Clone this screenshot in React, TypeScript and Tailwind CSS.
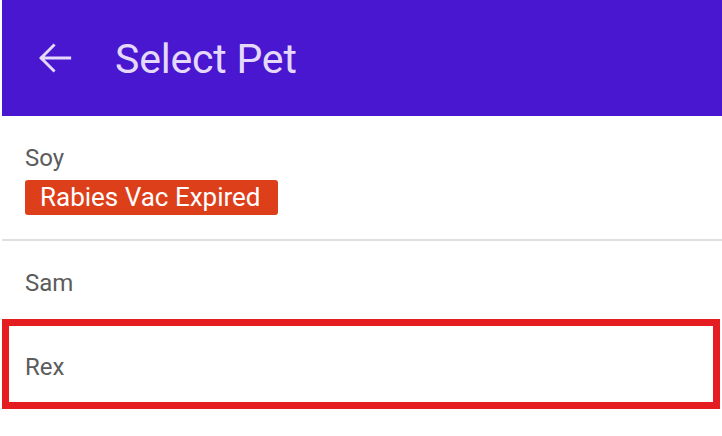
const pets = [
  { name: "Sam", selected: false },
  { name: "Rex", selected: true },
];

function BackArrow() {
  return (
    <svg width="44" height="44" viewBox="0 0 24 24" fill="none" aria-hidden>
      <path
        d="M20 12H4.6M11.2 5.2L4.4 12l6.8 6.8"
        stroke="currentColor"
        strokeWidth="1.6"
        strokeLinecap="square"
      />
    </svg>
  );
}

export default function App() {
  return (
    <div className="w-[722px] h-[436px] bg-white overflow-hidden font-['Roboto',sans-serif]">
      <header className="ml-[2px] h-[116px] bg-[#4a17d0] flex items-center text-[#e4d9fa]">
        <div className="ml-[31px] mt-[-1px] flex items-center">
          <BackArrow />
        </div>
        <h1 className="ml-[38px] text-[41px] leading-none tracking-[-0.2px] mt-[2px]">Select Pet</h1>
      </header>

      <div className="h-[123px] pl-[25px] pt-[28px] flex flex-col items-start">
        <span className="text-[24px] leading-[28px] text-[#5c5c5c]">Soy</span>
        <span className="mt-[8px] h-[35px] pl-[15px] pr-[17px] rounded-[3px] bg-[#dd3f1b] text-white text-[26px] leading-[35px]">
          Rabies Vac Expired
        </span>
      </div>
      <div className="ml-[2px] h-[2px] bg-[#e0e0e0]" />

      {pets.map((p) =>
        p.selected ? (
          <div
            key={p.name}
            className="ml-[2px] w-[718px] h-[90px] border-[7px] border-[#e51d20] pl-[16px] flex items-center"
          >
            <span className="text-[24px] leading-[28px] text-[#5c5c5c] mt-[5px]">{p.name}</span>
          </div>
        ) : (
          <div key={p.name} className="h-[78px] pl-[25px] flex items-center">
            <span className="text-[24px] leading-[28px] text-[#5c5c5c] mt-[6px]">{p.name}</span>
          </div>
        )
      )}
    </div>
  );
}
